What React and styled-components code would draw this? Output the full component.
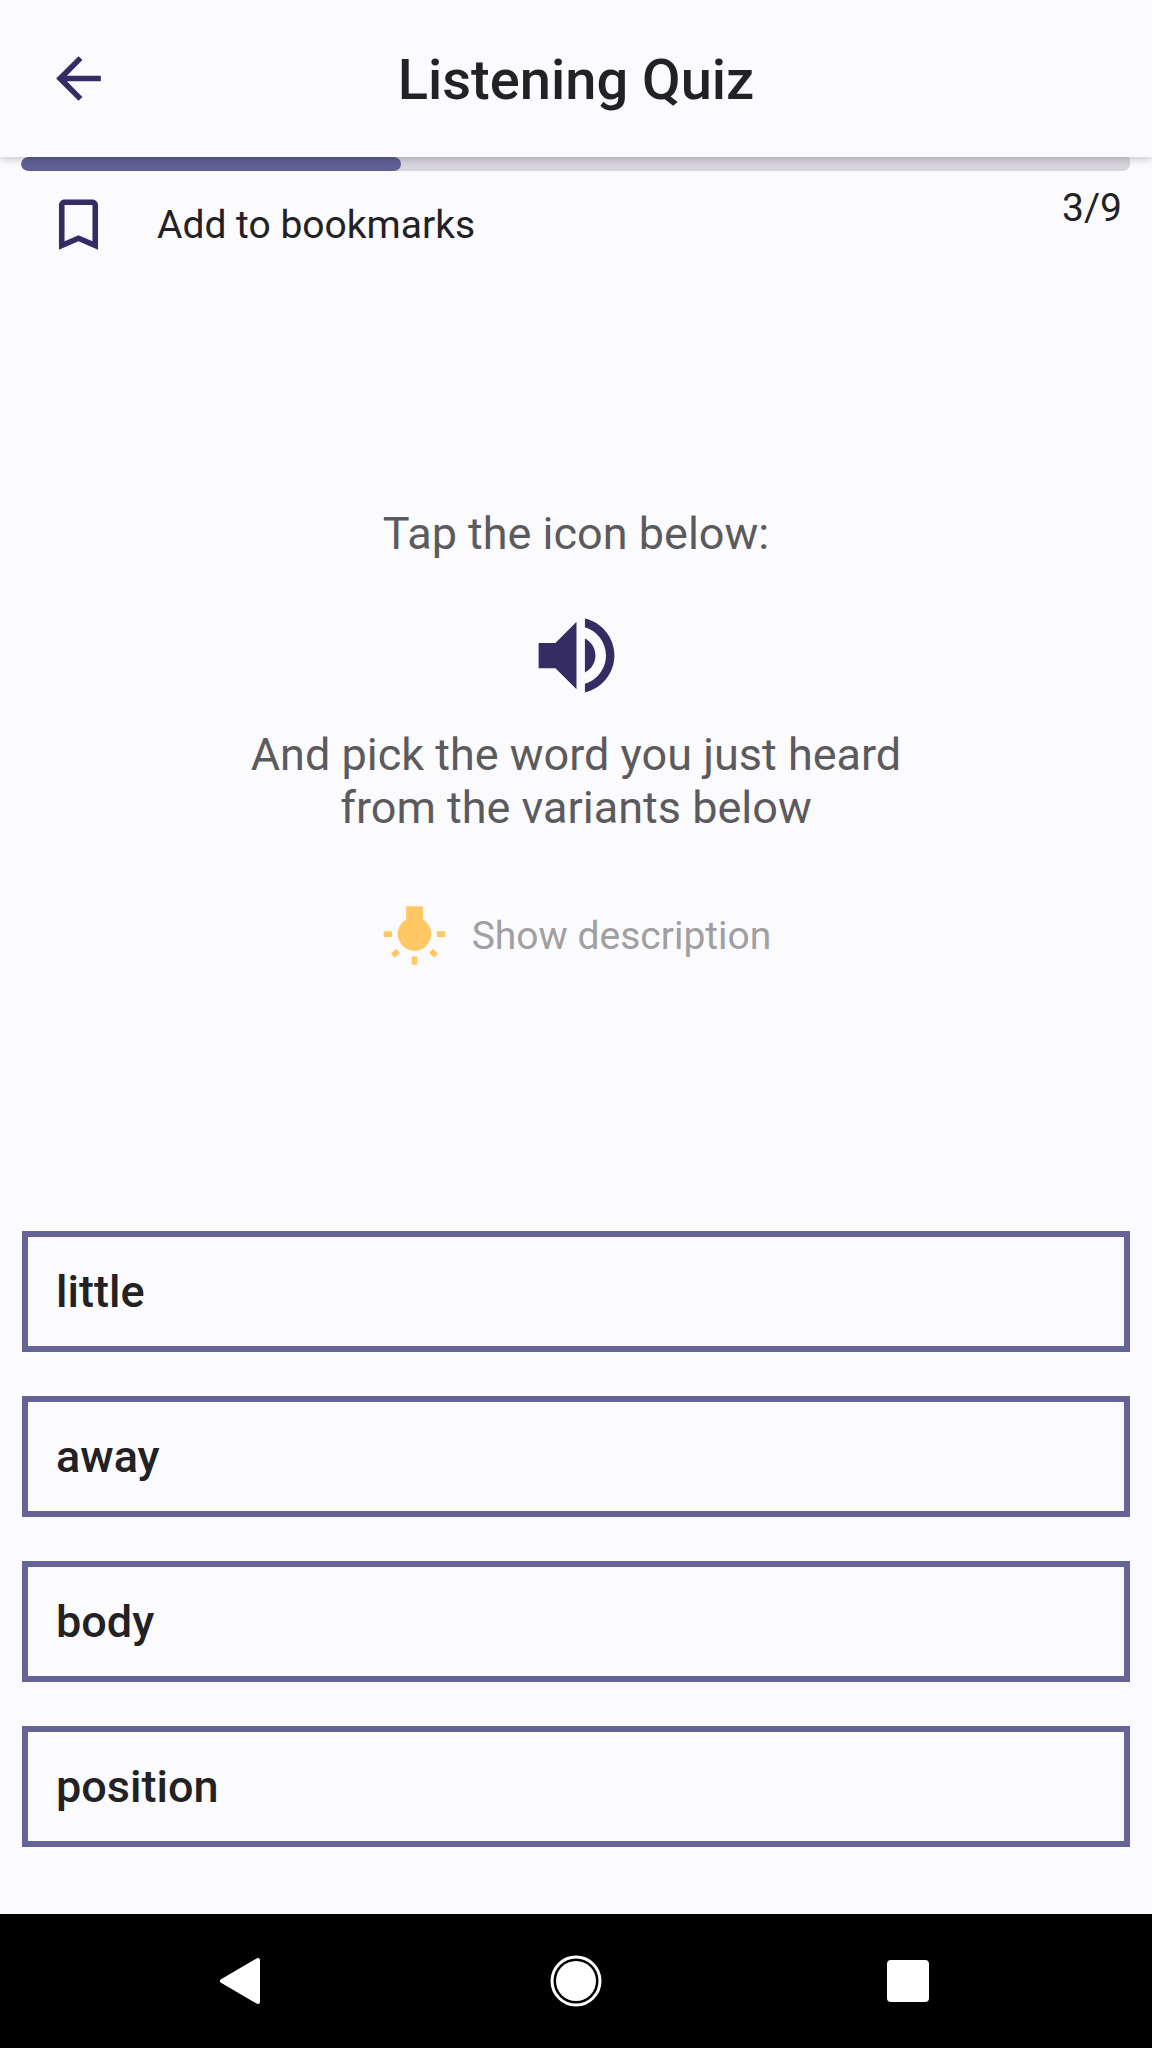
import React, { useState } from "react";
import styled, { createGlobalStyle } from "styled-components";

const words = ["little", "away", "body", "position"];
const current = 3;
const total = 9;

const ArrowIcon = () => (
  <Icon viewBox="0 0 24 24" aria-hidden="true">
    <path d="M20 11H7.83l5.59-5.59L12 4l-8 8 8 8 1.41-1.41L7.83 13H20v-2z" />
  </Icon>
);

const BookmarkIcon = ({ filled }) => (
  <Icon viewBox="0 0 24 24" aria-hidden="true">
    {filled ? (
      <path d="M17 3H7c-1.1 0-2 .9-2 2v16l7-3 7 3V5c0-1.1-.9-2-2-2z" />
    ) : (
      <path d="M17 3H7c-1.1 0-2 .9-2 2v16l7-3 7 3V5c0-1.1-.9-2-2-2zm0 15l-5-2.18L7 18V5h10v13z" />
    )}
  </Icon>
);

const SpeakerIcon = () => (
  <Icon size="101px" viewBox="0 0 24 24" aria-hidden="true">
    <path d="M3 9v6h4l5 5V4L7 9H3zm13.5 3c0-1.77-1.02-3.29-2.5-4.03v8.05c1.48-.73 2.5-2.25 2.5-4.02zM14 3.23v2.06c2.89.86 5 3.54 5 6.71s-2.11 5.85-5 6.71v2.06c4.01-.91 7-4.49 7-8.77s-2.99-7.86-7-8.77z" />
  </Icon>
);

const BulbIcon = () => (
  <Icon color="#ffc865" viewBox="0 0 24 24" aria-hidden="true">
    <path d="M3.55 18.54l1.41 1.41 1.8-1.79-1.41-1.41-1.8 1.79zM11 22.45h2V19.5h-2v2.95zM4 10.5H1v2h3v-2zm11-4.19V1.5H9v4.81C7.21 7.35 6 9.28 6 11.5c0 3.31 2.69 6 6 6s6-2.69 6-6c0-2.22-1.21-4.15-3-5.19zm5 4.19v2h3v-2h-3zm-2.76 7.66l1.79 1.8 1.41-1.41-1.8-1.79-1.4 1.4z" />
  </Icon>
);

const App = () => {
  const [bookmarked, setBookmarked] = useState(false);

  return (
    <Screen>
      <GlobalStyle />
      <Header>
        <IconButton aria-label="Back">
          <ArrowIcon />
        </IconButton>
        <Title>Listening Quiz</Title>
      </Header>
      <Progress
        role="progressbar"
        aria-label="Quiz progress"
        aria-valuenow={current}
        aria-valuemax={total}
      >
        <Bar style={{ width: `calc(${(current / total) * 100}% + 10px)` }} />
      </Progress>
      <Meta>
        <Bookmark
          aria-pressed={bookmarked}
          onClick={() => setBookmarked(!bookmarked)}
        >
          <BookmarkIcon filled={bookmarked} />
          Add to bookmarks
        </Bookmark>
        <Count>
          {current}/{total}
        </Count>
      </Meta>
      <Prompt>
        <Text>Tap the icon below:</Text>
        <Speaker aria-label="Play the word">
          <SpeakerIcon />
        </Speaker>
        <Text>And pick the word you just heard from the variants below</Text>
        <Hint>
          <BulbIcon />
          Show description
        </Hint>
      </Prompt>
      <Options>
        {words.map(word => (
          <Option key={word}>{word}</Option>
        ))}
      </Options>
      <SystemBar>
        <SystemButton aria-label="System back">
          <SystemIcon viewBox="0 0 52 52">
            <path
              d="M4 26L40 5V47Z"
              stroke="#fff"
              strokeWidth="4"
              strokeLinejoin="round"
            />
          </SystemIcon>
        </SystemButton>
        <SystemButton aria-label="Home">
          <SystemIcon viewBox="0 0 52 52">
            <circle
              cx="26"
              cy="26"
              r="24"
              fill="none"
              stroke="#fff"
              strokeWidth="3"
            />
            <circle cx="26" cy="26" r="20" />
          </SystemIcon>
        </SystemButton>
        <SystemButton aria-label="Recent apps">
          <SystemIcon viewBox="0 0 52 52">
            <rect x="5" y="5" width="42" height="42" rx="4" />
          </SystemIcon>
        </SystemButton>
      </SystemBar>
    </Screen>
  );
};

export default App;

const GlobalStyle = createGlobalStyle`
  * {
    box-sizing: border-box;
  }
  body {
    margin: 0;
    background: #fbfafd;
    color: #222124;
    font-family: Roboto, "Liberation Sans", sans-serif;
  }
  button {
    margin: 0;
    padding: 0;
    border: none;
    background: none;
    color: inherit;
    font: inherit;
    cursor: pointer;
  }
`;

const Screen = styled.div`
  display: flex;
  flex-direction: column;
  min-height: 100vh;
`;
const Icon = styled.svg`
  display: block;
  flex: none;
  width: ${({ size }) => size || "67px"};
  height: ${({ size }) => size || "67px"};
  fill: ${({ color }) => color || "#362c64"};
`;

/* clip-path keeps the shadow below the header and over the progress bar */
const Header = styled.header`
  display: grid;
  grid-template-columns: 67px 1fr 67px;
  align-items: center;
  height: 157px;
  padding: 0 45px;
  box-shadow: 0 2px 8px rgba(0, 0, 0, 0.22);
  clip-path: inset(0 0 -12px 0);
`;
const IconButton = styled.button`
  display: block;
`;
const Title = styled.h1`
  margin: 0;
  padding-top: 3px;
  font-size: 56px;
  font-weight: 500;
  line-height: 66px;
  text-align: center;
`;

const Progress = styled.div`
  height: 14px;
  margin: 0 22px 0 21px;
  border-radius: 7px 3px 7px 7px;
  background: #d8d6dc;
  overflow: hidden;
`;
const Bar = styled.div`
  height: 100%;
  border-radius: 7px;
  background: #625f96;
`;

const Meta = styled.div`
  display: flex;
  justify-content: space-between;
  align-items: flex-start;
  padding: 14px 30px 0 45px;
  font-size: 39px;
  line-height: 46px;
`;
const Bookmark = styled.button`
  display: flex;
  align-items: center;
  gap: 45px;
  padding-top: 6px;
`;
const Count = styled.span``;

const Prompt = styled.main`
  flex: 1;
  display: flex;
  flex-direction: column;
  align-items: center;
  justify-content: center;
  padding: 0 22px 13px;
`;
const Text = styled.p`
  max-width: 700px;
  margin: 0;
  color: #5b5a5d;
  font-size: 45px;
  line-height: 53px;
  text-align: center;
`;
const Speaker = styled.button`
  margin: 45px 0 22px;
`;
const Hint = styled.button`
  display: flex;
  align-items: center;
  gap: 24px;
  margin-top: 68px;
  color: #a09fa2;
  font-size: 39px;
  line-height: 46px;
`;

const Options = styled.div`
  display: flex;
  flex-direction: column;
  gap: 44px;
  padding: 0 22px 67px;
`;
const Option = styled.button`
  && {
    padding: 28px;
    border: 6px solid #666497;
    font-size: 45px;
    font-weight: 500;
    line-height: 53px;
    text-align: left;
  }
`;

const SystemBar = styled.nav`
  display: flex;
  height: 134px;
  padding: 0 78px;
  background: #000;
`;
const SystemButton = styled.button`
  flex: 1;
  display: flex;
  align-items: center;
  justify-content: center;
`;
const SystemIcon = styled.svg`
  width: 52px;
  height: 52px;
  fill: #fff;
`;
